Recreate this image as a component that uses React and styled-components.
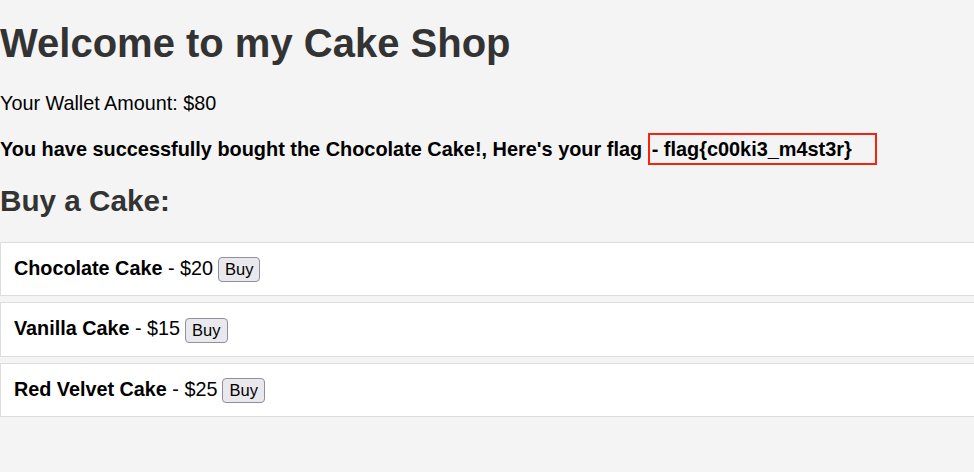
import styled, { createGlobalStyle } from "styled-components";

const Global = createGlobalStyle`
  html, body {
    margin: 0;
    padding: 0;
    background: #f4f4f4;
    overflow-x: hidden;
  }
  body {
    font-family: "Liberation Sans", Arial, sans-serif;
    font-size: 19.8px;
    color: #000;
  }
`

const Page = styled.div`
  padding-top: 21px;
`

const Title = styled.h1`
  margin: 0 0 26px;
  font-size: 40px;
  font-weight: bold;
  color: #333;
`

const Wallet = styled.p`
  margin: 0 0 23px;
`

const Message = styled.p`
  margin: 0 0 23px;
  font-weight: bold;
  font-size: 19.9px;
`

const Flag = styled.span`
  border: 2px solid #f5230f;
  padding: 3px 23px 3px 2px;
`

const SubTitle = styled.h2`
  margin: 0 0 24px;
  font-size: 29.7px;
  font-weight: bold;
  color: #333;
`

const CakeList = styled.div`
  display: flex;
  flex-direction: column;
  gap: 6px;
  margin-right: -20px;
`

const Card = styled.div`
  background: #fff;
  border: 1px solid #ddd;
  padding: 13px 13px 13px;
  line-height: 25px;
`

const BuyButton = styled.button`
  font-family: "Liberation Sans", Arial, sans-serif;
  font-size: 16.5px;
  color: #000;
  background: #e9e9ed;
  border: 1px solid #8f8f9d;
  border-radius: 4px;
  padding: 2px 6px;
  margin-left: 5px;
  line-height: 19px;
  vertical-align: middle;
`

const cakes = [
  { name: "Chocolate Cake", price: 20 },
  { name: "Vanilla Cake", price: 15 },
  { name: "Red Velvet Cake", price: 25 },
]

function App() {
  return (
    <Page>
      <Global />
      <Title>Welcome to my Cake Shop</Title>
      <Wallet>Your Wallet Amount: $80</Wallet>
      <Message>
        You have successfully bought the Chocolate Cake!, Here's your flag{" "}
        <Flag>- flag{"{c00ki3_m4st3r}"}</Flag>
      </Message>
      <SubTitle>Buy a Cake:</SubTitle>
      <CakeList>
        {cakes.map((cake) => (
          <Card key={cake.name}>
            <strong>{cake.name}</strong> - ${cake.price}
            <BuyButton>Buy</BuyButton>
          </Card>
        ))}
      </CakeList>
    </Page>
  );
}

export default App;
